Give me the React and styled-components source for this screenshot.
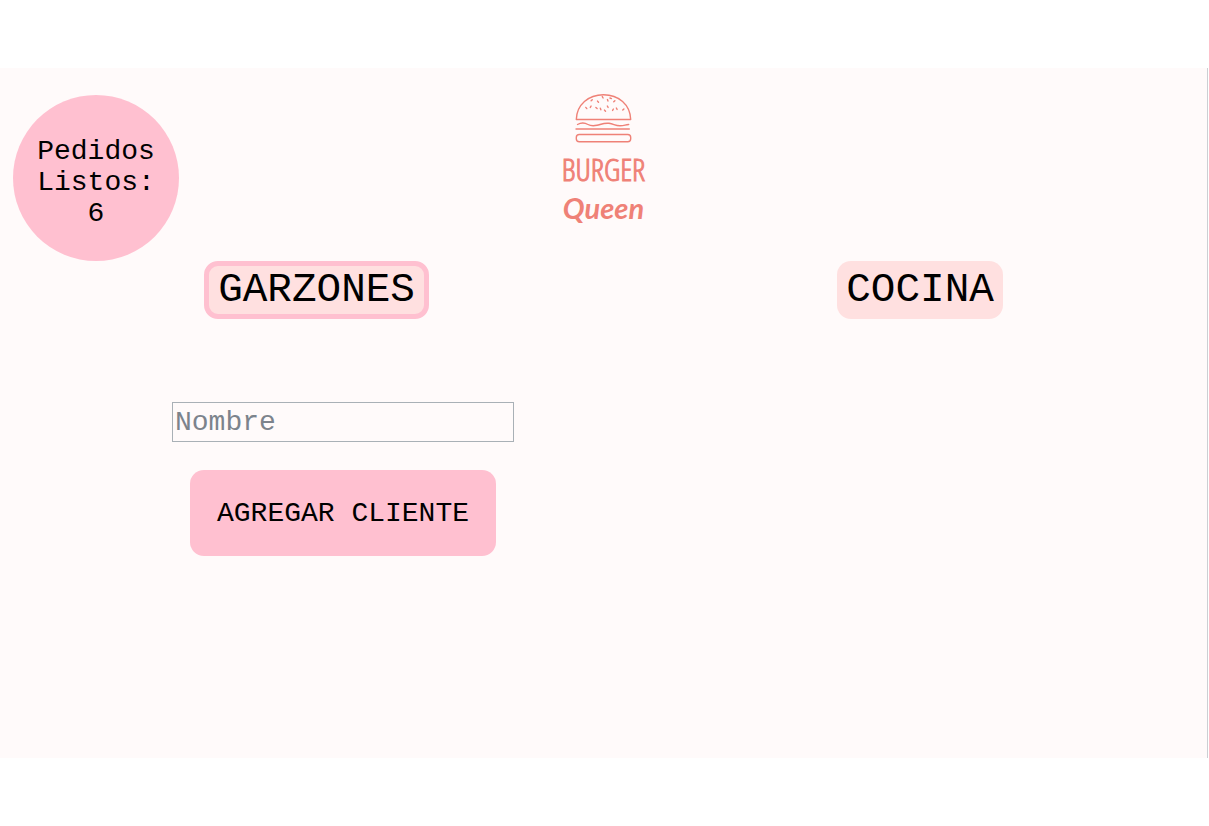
import React from 'react';
import styled, { createGlobalStyle } from 'styled-components';

const GlobalStyle = createGlobalStyle`
  * { box-sizing: border-box; }
  body { margin: 0; background: #ffffff; }
  body, button, input { font-family: "Liberation Mono", "Courier New", monospace; }
`;

const Page = styled.main`
  margin: 68px 1px 68px 0;
  min-height: calc(100vh - 136px);
  background: #fffafa;
  border-right: 1px solid #cccfd3;
`;

const Header = styled.header`
  display: grid;
  grid-template-columns: 1fr auto 1fr;
  align-items: start;
  padding: 27px 13px 0;
`;

const ReadyOrders = styled.div`
  display: flex;
  align-items: center;
  justify-content: center;
  width: 166px;
  height: 166px;
  padding: 8px 24px 0;
  border-radius: 50%;
  background: #ffc0d0;
  color: #000000;
  font-size: 28px;
  line-height: 31px;
  text-align: center;
`;

const Logo = styled.div`
  display: flex;
  flex-direction: column;
  align-items: center;
  color: #ef8177;
`;

const BurgerIcon = styled.svg`
  display: block;
  width: 58px;
  height: 50px;
  overflow: visible;
`;

const LogoTitle = styled.span`
  font-family: "Open Sans Condensed Light", "Open Sans Condensed", "Roboto Condensed", "Liberation Sans Narrow", sans-serif;
  font-size: 31px;
  font-weight: 300;
  line-height: 48px;
  -webkit-text-stroke: 1px currentColor;
`;

const LogoScript = styled.span`
  font-family: Lato, sans-serif;
  font-size: 29px;
  font-style: italic;
  font-weight: 700;
  line-height: 30px;
`;

const Nav = styled.nav`
  display: flex;
  justify-content: space-around;
`;

const NavButton = styled.button`
  height: 58px;
  padding: 0 9px;
  border: ${({ $active }) => ($active ? '5px solid #ffc0d0' : '0')};
  border-radius: 14px;
  background: #ffe0e0;
  color: #000000;
  font-size: 41px;
  line-height: 46px;
`;

const ClientForm = styled.form`
  display: flex;
  flex-direction: column;
  align-items: center;
  gap: 28px;
  width: 342px;
  margin: 83px 0 0 172px;
`;

const NameInput = styled.input`
  width: 100%;
  height: 40px;
  padding: 1px 2px;
  border: 1px solid #a9b0b6;
  border-radius: 0;
  background: transparent;
  color: #000000;
  font-size: 28px;

  &::placeholder { color: #7c838c; opacity: 1; }
`;

const SubmitButton = styled.button`
  height: 86px;
  padding: 0 27px;
  border: 0;
  border-radius: 14px;
  background: #ffc0d0;
  color: #000000;
  font-size: 28px;
`;

const seeds = [
  [17.7, 6.2, -45], [24, 7.7, 50], [28.7, 3.3, 60], [33.7, 6.3, 70], [36.7, 4.3, 20], [40.3, 7.3, -45],
  [12.3, 14, 50], [16.7, 12.7, -60], [22.5, 14, 40], [26.6, 15, 70],
  [31, 16.7, 50], [33.7, 12.7, 60], [39, 15.7, -60], [42.7, 14.7, 60], [49.3, 15.5, -45],
];

export default function App() {
  return (
    <>
      <GlobalStyle />
      <Page>
        <Header>
          <ReadyOrders>Pedidos Listos: 6</ReadyOrders>
          <Logo>
            <BurgerIcon viewBox="1 1 58 50" fill="none" stroke="currentColor" strokeWidth="1.4" strokeLinecap="round" aria-hidden="true">
              <path d="M2.300 25.500C2.700 10.500 14.500 .7 29.500 .7S56.300 10.500 56.700 25.500Z" strokeLinejoin="round" />
              {seeds.map(([x, y, angle]) => (
                <path key={`${x}-${y}`} d="M-.8 0H.8" transform={`translate(${x} ${y}) rotate(${angle})`} />
              ))}
              <path d="M3.500 30.500C7 28.500 11 28.800 14 30.500S19.500 32 23 31.300S30 28.600 35 29.300S41 31.800 46 31.800S51 30.500 54.700 30.500" />
              <path d="M2 35H55.300" />
              <rect x="2.300" y="40.500" width="54.400" height="7.200" rx="3" />
            </BurgerIcon>
            <LogoTitle>BURGER</LogoTitle>
            <LogoScript>Queen</LogoScript>
          </Logo>
        </Header>
        <Nav>
          <NavButton type="button" $active>GARZONES</NavButton>
          <NavButton type="button">COCINA</NavButton>
        </Nav>
        <ClientForm onSubmit={(event) => event.preventDefault()}>
          <NameInput type="text" placeholder="Nombre" aria-label="Nombre" />
          <SubmitButton type="submit">AGREGAR CLIENTE</SubmitButton>
        </ClientForm>
      </Page>
    </>
  );
}
